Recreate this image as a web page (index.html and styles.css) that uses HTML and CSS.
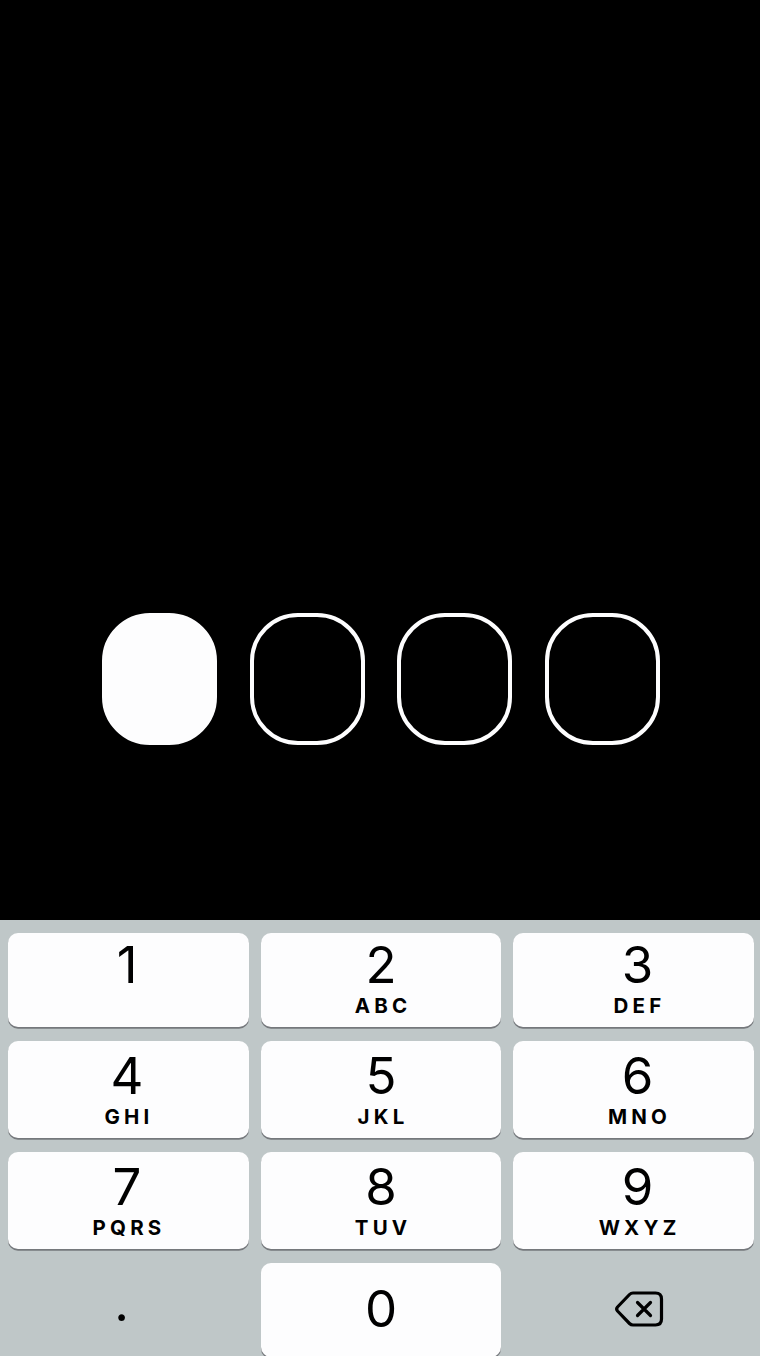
FILE: index.html
```html
<!DOCTYPE html>
<html lang="en">
<head>
<meta charset="utf-8">
<title>Passcode</title>
<link rel="stylesheet" href="styles.css">
</head>
<body>
<main class="screen">
  <section class="code">
    <div class="slot filled"></div>
    <div class="slot"></div>
    <div class="slot"></div>
    <div class="slot"></div>
  </section>
  <section class="keypad">
    <div class="key"><span class="digit">1</span></div>
    <div class="key"><span class="digit">2</span><span class="letters">ABC</span></div>
    <div class="key"><span class="digit">3</span><span class="letters">DEF</span></div>
    <div class="key"><span class="digit">4</span><span class="letters">GHI</span></div>
    <div class="key"><span class="digit">5</span><span class="letters">JKL</span></div>
    <div class="key"><span class="digit">6</span><span class="letters">MNO</span></div>
    <div class="key"><span class="digit">7</span><span class="letters">PQRS</span></div>
    <div class="key"><span class="digit">8</span><span class="letters">TUV</span></div>
    <div class="key"><span class="digit">9</span><span class="letters">WXYZ</span></div>
    <div class="key plain dot"><span class="digit">.</span></div>
    <div class="key zero"><span class="digit">0</span></div>
    <div class="key plain erase">
      <svg class="icon" width="52" height="40" viewBox="0 0 52 40" fill="none" stroke="#000" stroke-width="3.2" stroke-linecap="round" stroke-linejoin="round"><path d="M20 4H42.500Q48.500 4 48.500 10V30Q48.500 36 42.500 36H20Q18 36 16.500 34.500L4.500 22Q2.800 20 4.500 18L16.500 5.500Q18 4 20 4Z"/><path d="M24.500 13.500L37.500 26.500M37.500 13.500L24.500 26.500"/></svg>
    </div>
  </section>
</main>
</body>
</html>
```
FILE: styles.css
```css
body {
  margin: 0;
  background: #000;
  font-family: Inter, "Liberation Sans", sans-serif;
}
.screen {
  display: flex;
  flex-direction: column;
  height: 1356px;
  overflow: hidden;
}
.code {
  display: flex;
  gap: 32.800px;
  box-sizing: border-box;
  height: 920px;
  padding: 613px 0 0 101.800px;
  flex: none;
}
.slot {
  box-sizing: border-box;
  width: 115px;
  height: 132px;
  border: 4px solid #fdfdfe;
  border-radius: 48px;
}
.filled { background: #fdfdfe; }
.keypad {
  display: grid;
  flex: none;
  box-sizing: border-box;
  height: 436px;
  grid-template-columns: repeat(3, 240.500px);
  grid-template-rows: 94.500px 97px 97px 94px;
  column-gap: 12px;
  row-gap: 14px;
  padding: 12.500px 0 0 8.300px;
  background: #bfc7c8;
}
.key {
  display: flex;
  flex-direction: column;
  align-items: center;
  box-sizing: border-box;
  padding-top: 9px;
  border-radius: 10px;
  background: #fdfdfe;
  box-shadow: 0 1.700px 0 #75787c;
  color: #000;
}
.key:nth-child(-n+3) { padding-top: 6px; }
.key:nth-child(3n+1) { padding-right: 3px; }
.key:nth-child(3n) { padding-left: 8px; }
.digit {
  font-size: 51px;
  line-height: 52px;
  font-weight: 400;
}
.letters {
  margin-top: 4px;
  padding-left: 4px;
  font-size: 20.500px;
  line-height: 22px;
  font-weight: 700;
  letter-spacing: 4.200px;
}
.key.plain {
  background: none;
  box-shadow: none;
}
.key.zero { padding-top: 20px; }
.key.dot { padding: 14px 14px 0 0; }
.key.erase {
  padding: 0 0 3px 10px;
  justify-content: center;
}
.icon { display: block; }
```
